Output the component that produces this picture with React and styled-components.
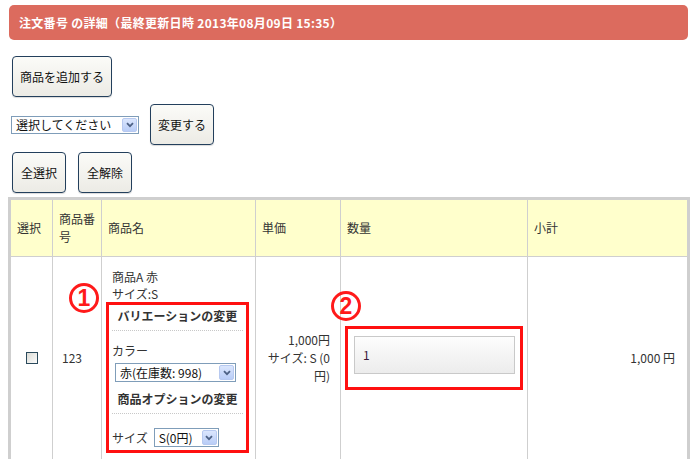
import React from "react";
import styled, { createGlobalStyle } from "styled-components";

const GlobalStyle = createGlobalStyle`
  html, body {
    margin: 0;
    padding: 0;
    background: #fff;
  }
  body {
    font-family: "Noto Sans CJK JP", "Liberation Sans", sans-serif;
    font-size: 12px;
    color: #333;
  }
`;

const Page = styled.div`
  padding: 5px 4px 0 8px;
  width: 682px;
`;

const TitleBar = styled.div`
  margin-left: 1px;
  width: 679px;
  height: 35px;
  box-sizing: border-box;
  padding-left: 10px;
  display: flex;
  align-items: center;
  background: #dc6b5e;
  border-radius: 5px;
  color: #fff;
  font-weight: bold;
  font-size: 12px;
  letter-spacing: 0.3px;
`;

const ToolRow = styled.div`
  display: flex;
  align-items: center;
  gap: ${(p) => p.gap || 11}px;
  margin-top: ${(p) => p.top}px;
  padding-left: ${(p) => p.left || 4}px;
`;

const Button = styled.button`
  height: 41px;
  padding: 0 ${(p) => p.px || 7}px;
  border: 1px solid #233f5c;
  border-radius: 4px;
  background: linear-gradient(#fbfbf8, #ecebe5);
  box-shadow: 0 1px 1px rgba(0, 0, 0, 0.15);
  font-family: "Noto Sans CJK JP", sans-serif;
  font-size: 12px;
  color: #111;
  cursor: pointer;
`;

const FakeSelect = styled.div`
  display: inline-flex;
  align-items: center;
  justify-content: space-between;
  width: ${(p) => p.w}px;
  height: ${(p) => p.h || 19}px;
  box-sizing: border-box;
  border: 1px solid #7f9db9;
  background: #fff;
  padding: 0 1px 0 4px;
  font-size: 12px;
  color: #111;
  font-family: "Noto Sans CJK JP", sans-serif;
`;

const Arrow = styled.span`
  display: flex;
  align-items: center;
  justify-content: center;
  width: 15px;
  height: ${(p) => p.h || 15}px;
  box-sizing: border-box;
  border: 1px solid #b7c9f0;
  border-radius: 2px;
  background: linear-gradient(#dbe6fd, #b9cdf7);
`;

function Select({ w, h, children }) {
  return (
    <FakeSelect w={w} h={h}>
      <span>{children}</span>
      <Arrow h={h ? h - 4 : 15}>
        <svg width="8" height="6" viewBox="0 0 8 6">
          <path d="M1 1.2 L4 4.2 L7 1.2" fill="none" stroke="#4d6185" strokeWidth="1.8" />
        </svg>
      </Arrow>
    </FakeSelect>
  );
}

const Table = styled.table`
  margin-top: 4px;
  width: 682px;
  border: 3px solid #cfcfcf;
  border-bottom: none;
  border-collapse: separate;
  border-spacing: 0;
  table-layout: fixed;
  box-sizing: border-box;
`;

const Th = styled.th`
  height: 56px;
  padding: 0 6px;
  background: #ffffcc;
  text-align: left;
  font-weight: normal;
  line-height: 18px;
  color: #333;
  vertical-align: middle;
  & + & {
    border-left: 1px solid #cfcfcf;
  }
`;

const Td = styled.td`
  border-top: 1px solid #cfcfcf;
  padding: ${(p) => p.pad || "0 10px"};
  text-align: ${(p) => p.align || "left"};
  vertical-align: middle;
  line-height: 18px;
  color: #333;
  & + & {
    border-left: 1px solid #cfcfcf;
  }
`;

const CheckBox = styled.span`
  display: block;
  margin: 0 auto;
  width: 12px;
  height: 12px;
  box-sizing: border-box;
  border: 1px solid #2b4a5c;
  background: linear-gradient(135deg, #dcdcd6, #fbfbfb);
`;

const NameLine = styled.div`
  line-height: 17px;
`;

const Marked = styled.div`
  position: relative;
  margin-left: ${(p) => p.shift}px;
  width: ${(p) => p.w}px;
  box-sizing: border-box;
  border: 3px solid #ff1010;
  padding: ${(p) => p.pad};
`;

const Badge = styled.span`
  position: absolute;
  left: ${(p) => p.x}px;
  top: ${(p) => p.y}px;
  width: 30px;
  height: 30px;
  box-sizing: border-box;
  border: 3px solid #ff1a1a;
  border-radius: 50%;
  display: flex;
  align-items: center;
  justify-content: center;
  color: #ff1a1a;
  font-family: "Liberation Sans", Arial, sans-serif;
  font-weight: bold;
  font-size: 23px;
  line-height: 1;
`;

const BlockTitle = styled.div`
  text-align: center;
  font-weight: bold;
  line-height: 20px;
  padding: 1px 0 4px;
  margin-top: ${(p) => p.top || 0}px;
  border-bottom: 1px dotted #c8c8c8;
`;

const Label = styled.div`
  margin-top: ${(p) => p.top}px;
  line-height: 18px;
`;

const Indent = styled.div`
  margin-top: 3px;
  padding-left: 3px;
`;

const SizeRow = styled.div`
  display: flex;
  align-items: center;
  gap: 6px;
  margin-top: 14px;
  padding-bottom: 3px;
`;

const QtyInput = styled.div`
  height: 38px;
  box-sizing: border-box;
  border: 1px solid #c9c9c9;
  background: linear-gradient(#fdfdfd, #ececec);
  display: flex;
  align-items: center;
  padding-left: 8px;
  color: #3a1a3a;
  font-size: 12px;
`;

export default function App() {
  return (
    <>
      <GlobalStyle />
      <Page>
        <TitleBar>注文番号 の詳細（最終更新日時 2013年08月09日 15:35）</TitleBar>

        <ToolRow top={16}>
          <Button>商品を追加する</Button>
        </ToolRow>

        <ToolRow top={7} left={3}>
          <Select w={128} h={18}>選択してください</Select>
          <Button>変更する</Button>
        </ToolRow>

        <ToolRow top={7} gap={12}>
          <Button px={8}>全選択</Button>
          <Button px={8}>全解除</Button>
        </ToolRow>

        <Table>
          <colgroup>
            <col style={{ width: 41 }} />
            <col style={{ width: 49 }} />
            <col style={{ width: 154 }} />
            <col style={{ width: 85 }} />
            <col style={{ width: 187 }} />
            <col style={{ width: 160 }} />
          </colgroup>
          <thead>
            <tr>
              <Th>選択</Th>
              <Th>商品番号</Th>
              <Th>商品名</Th>
              <Th>単価</Th>
              <Th>数量</Th>
              <Th>小計</Th>
            </tr>
          </thead>
          <tbody>
            <tr>
              <Td pad="0">
                <CheckBox />
              </Td>
              <Td pad="0 9px">123</Td>
              <Td pad="11px 6px 6px 10px">
                <NameLine>商品A 赤</NameLine>
                <NameLine>サイズ:S</NameLine>
                <Marked shift={-6} w={143} pad="0 3px 0 3px">
                  <Badge x={-40} y={-22}>1</Badge>
                  <BlockTitle>バリエーションの変更</BlockTitle>
                  <Label top={11}>カラー</Label>
                  <Indent>
                    <Select w={121}>赤(在庫数: 998)</Select>
                  </Indent>
                  <BlockTitle top={6}>商品オプションの変更</BlockTitle>
                  <SizeRow>
                    <span>サイズ</span>
                    <Select w={65}>S(0円)</Select>
                  </SizeRow>
                </Marked>
              </Td>
              <Td align="right" pad="0 10px 0 4px">
                1,000円
                <br />
                サイズ: S (0
                <br />
                円)
              </Td>
              <Td pad="0 3px 0 4px">
                <Marked shift={0} w={178} pad="7px 5px 13px 6px">
                  <Badge x={-17} y={-38}>2</Badge>
                  <QtyInput>1</QtyInput>
                </Marked>
              </Td>
              <Td align="right" pad="0 12px 0 6px">1,000 円</Td>
            </tr>
          </tbody>
        </Table>
      </Page>
    </>
  );
}
